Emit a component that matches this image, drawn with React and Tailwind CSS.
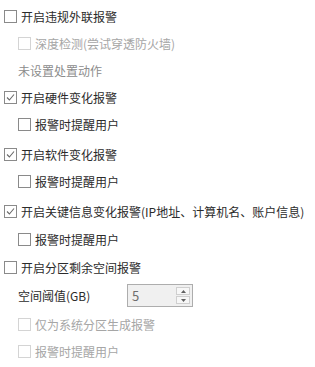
import { useState } from "react";

function Box({ checked, disabled }) {
  return (
    <span className={`w-[13px] h-[13px] border flex items-center justify-center bg-white shrink-0 ${disabled ? "border-[#d4d4d4]" : "border-[#8a8a8a]"}`}>
      {checked && (
        <svg width="9" height="9" viewBox="0 0 9 9">
          <path d="M1 4.5 L3.4 7 L8 1.5" fill="none" stroke="#6a6a6a" strokeWidth="1.1" />
        </svg>
      )}
    </span>
  );
}

function Row({ label, checked, disabled, indent, className = "" }) {
  return (
    <div className={`h-[27px] flex items-center gap-[4px] ${indent ? "pl-[18px]" : "pl-[4px]"} ${className}`}>
      <Box checked={checked} disabled={disabled} />
      <span className={disabled ? "text-[#a6a6a6]" : "text-[#2b2b2b]"}>{label}</span>
    </div>
  );
}

export default function App() {
  const [gb] = useState(5);

  return (
    <div className="w-[315px] h-[367px] bg-white pt-[3px] text-[12px] leading-none" style={{ fontFamily: '"Noto Sans CJK SC", "Noto Sans", sans-serif' }}>
      <Row label="开启违规外联报警" />
      <Row label="深度检测(尝试穿透防火墙)" disabled indent />
      <div className="h-[27px] flex items-center pl-[18px] text-[#8c8c8c]">未设置处置动作</div>
      <Row label="开启硬件变化报警" checked />
      <Row label="报警时提醒用户" indent />
      <Row label="开启软件变化报警" checked className="mt-[3px]" />
      <Row label="报警时提醒用户" indent />
      <Row label="开启关键信息变化报警(IP地址、计算机名、账户信息)" checked className="mt-[3px]" />
      <Row label="报警时提醒用户" indent className="mt-[1px]" />
      <Row label="开启分区剩余空间报警" className="mt-[1px]" />
      <div className="h-[27px] flex items-center pl-[18px] mt-[1px]">
        <span className="w-[109px] text-[#2b2b2b]">空间阈值(GB)</span>
        <div className="w-[66px] h-[23px] border border-[#adadad] bg-[#f0f0f0] flex items-stretch">
          <span className="flex-1 flex items-center pl-[4px] text-[13px] text-[#6d6d6d]">{gb}</span>
          <div className="w-[14px] my-[2px] mr-[2px] flex flex-col gap-[1px]">
            <div className="flex-1 border border-[#cfcfcf] bg-[#f7f7f7] flex items-center justify-center">
              <svg width="5" height="3" viewBox="0 0 5 3"><path d="M0 3 L2.5 0 L5 3 Z" fill="#606060" /></svg>
            </div>
            <div className="flex-1 border border-[#cfcfcf] bg-[#f7f7f7] flex items-center justify-center">
              <svg width="5" height="3" viewBox="0 0 5 3"><path d="M0 0 L2.5 3 L5 0 Z" fill="#606060" /></svg>
            </div>
          </div>
        </div>
      </div>
      <Row label="仅为系统分区生成报警" disabled indent className="mt-[2px]" />
      <Row label="报警时提醒用户" disabled indent />
    </div>
  );
}
